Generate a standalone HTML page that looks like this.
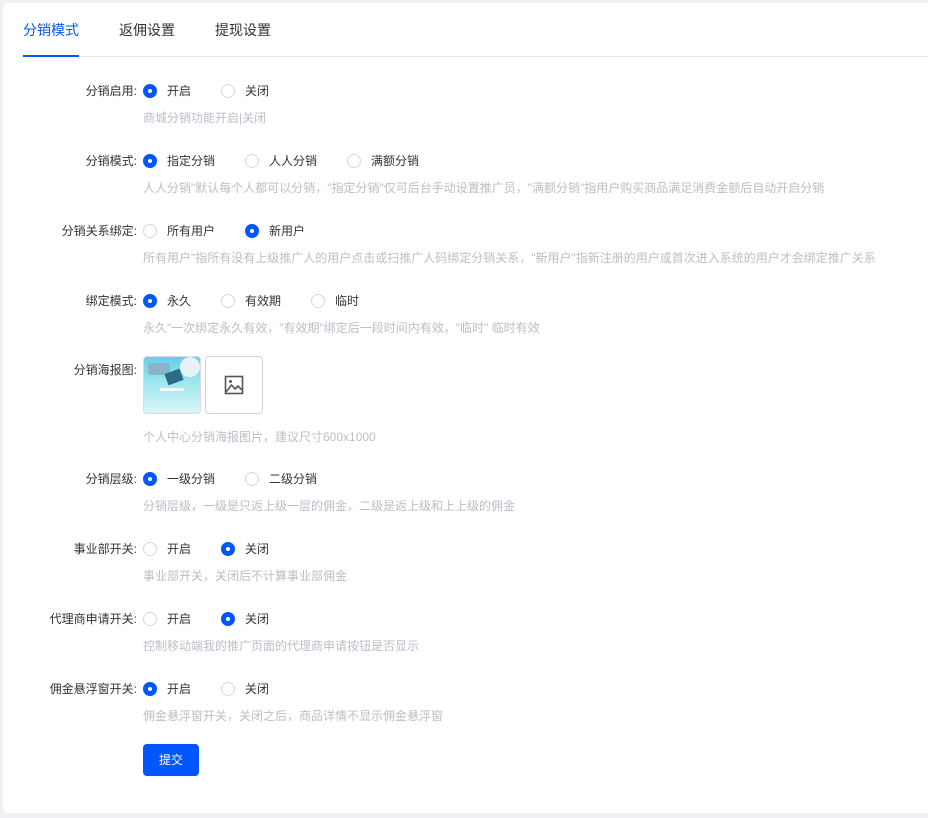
<!DOCTYPE html>
<html><head><meta charset="utf-8"><style>
body{margin:0;width:928px;height:818px;background:#f0f1f5;font-family:"Liberation Sans","Noto Sans CJK SC",sans-serif;font-size:12px;color:#333;position:relative;overflow:hidden}
.card{position:absolute;left:3px;top:3px;width:940px;height:810px;background:#fff;border-radius:4px}
.a{position:absolute;white-space:nowrap}
.tab{top:21px;font-size:14px;color:#333;line-height:18px}
.lbl{right:791px;text-align:right;line-height:16px}
.r{position:absolute;width:12px;height:12px;border:1px solid #d6d9e0;border-radius:50%;background:#fff}
.r.on{border-color:#0256ff;background:#0256ff}
.r.on::after{content:"";position:absolute;left:4px;top:4px;width:4px;height:4px;border-radius:50%;background:#fff}
.t{line-height:16px}
.h{color:#bbbec6;line-height:16px}
</style></head><body>
<div class="card"></div>
<div class="a tab" style="left:23px;color:#0256ff">分销模式</div>
<div class="a tab" style="left:119px">返佣设置</div>
<div class="a tab" style="left:215px">提现设置</div>
<div class="a" style="left:23px;top:56px;width:910px;height:1px;background:#e6e7ee"></div>
<div class="a" style="left:23px;top:55px;width:56px;height:2px;background:#0256ff"></div>

<div class="a lbl" style="top:83px">分销启用:</div>
<div class="r on" style="left:143px;top:84px"></div><div class="a t" style="left:167px;top:83px">开启</div>
<div class="r" style="left:221px;top:84px"></div><div class="a t" style="left:245px;top:83px">关闭</div>
<div class="a h" style="left:143px;top:110px">商城分销功能开启|关闭</div>

<div class="a lbl" style="top:153px">分销模式:</div>
<div class="r on" style="left:143px;top:154px"></div><div class="a t" style="left:167px;top:153px">指定分销</div>
<div class="r" style="left:245px;top:154px"></div><div class="a t" style="left:269px;top:153px">人人分销</div>
<div class="r" style="left:347px;top:154px"></div><div class="a t" style="left:371px;top:153px">满额分销</div>
<div class="a h" style="left:143px;top:180px">人人分销"默认每个人都可以分销，"指定分销"仅可后台手动设置推广员，"满额分销"指用户购买商品满足消费金额后自动开启分销</div>

<div class="a lbl" style="top:223px">分销关系绑定:</div>
<div class="r" style="left:143px;top:224px"></div><div class="a t" style="left:167px;top:223px">所有用户</div>
<div class="r on" style="left:245px;top:224px"></div><div class="a t" style="left:269px;top:223px">新用户</div>
<div class="a h" style="left:143px;top:250px">所有用户"指所有没有上级推广人的用户点击或扫推广人码绑定分销关系，"新用户"指新注册的用户或首次进入系统的用户才会绑定推广关系</div>

<div class="a lbl" style="top:293px">绑定模式:</div>
<div class="r on" style="left:143px;top:294px"></div><div class="a t" style="left:167px;top:293px">永久</div>
<div class="r" style="left:221px;top:294px"></div><div class="a t" style="left:245px;top:293px">有效期</div>
<div class="r" style="left:311px;top:294px"></div><div class="a t" style="left:335px;top:293px">临时</div>
<div class="a h" style="left:143px;top:320px">永久"一次绑定永久有效，"有效期"绑定后一段时间内有效，"临时" 临时有效</div>

<div class="a lbl" style="top:362px">分销海报图:</div>
<div class="a" style="left:143px;top:356px;width:56px;height:56px;border:1px solid #d6dbe6;border-radius:4px;overflow:hidden;background:linear-gradient(180deg,#5fd0e6 0%,#9fe6f0 45%,#d9f6f8 100%)">
<div class="a" style="left:4px;top:6px;width:22px;height:12px;background:#8ab3c8;border-radius:3px"></div>
<div class="a" style="left:22px;top:14px;width:16px;height:12px;background:#2d6a8a;transform:rotate(-20deg)"></div>
<div class="a" style="left:36px;top:0;width:20px;height:20px;background:#e8f2f6;border-radius:50%"></div>
<div class="a" style="left:16px;top:31px;width:24px;height:3px;background:#fff;opacity:.8"></div>
</div>
<div class="a" style="left:205px;top:356px;width:56px;height:56px;border:1px solid #ccd3e0;border-radius:4px;background:#fff"></div>
<svg class="a" style="left:224px;top:375px" width="20" height="20" viewBox="0 0 20 20"><rect x="1.5" y="1.5" width="17" height="17" fill="none" stroke="#555" stroke-width="1.6"/><circle cx="6.5" cy="6.5" r="1.5" fill="#555"/><path d="M2 17 L7.5 10 L11 14 L14 11 L18 15" fill="none" stroke="#555" stroke-width="1.6"/></svg>
<div class="a h" style="left:143px;top:429px">个人中心分销海报图片，建议尺寸600x1000</div>

<div class="a lbl" style="top:471px">分销层级:</div>
<div class="r on" style="left:143px;top:472px"></div><div class="a t" style="left:167px;top:471px">一级分销</div>
<div class="r" style="left:245px;top:472px"></div><div class="a t" style="left:269px;top:471px">二级分销</div>
<div class="a h" style="left:143px;top:498px">分销层级，一级是只返上级一层的佣金，二级是返上级和上上级的佣金</div>

<div class="a lbl" style="top:541px">事业部开关:</div>
<div class="r" style="left:143px;top:542px"></div><div class="a t" style="left:167px;top:541px">开启</div>
<div class="r on" style="left:221px;top:542px"></div><div class="a t" style="left:245px;top:541px">关闭</div>
<div class="a h" style="left:143px;top:568px">事业部开关，关闭后不计算事业部佣金</div>

<div class="a lbl" style="top:611px">代理商申请开关:</div>
<div class="r" style="left:143px;top:612px"></div><div class="a t" style="left:167px;top:611px">开启</div>
<div class="r on" style="left:221px;top:612px"></div><div class="a t" style="left:245px;top:611px">关闭</div>
<div class="a h" style="left:143px;top:638px">控制移动端我的推广页面的代理商申请按钮是否显示</div>

<div class="a lbl" style="top:681px">佣金悬浮窗开关:</div>
<div class="r on" style="left:143px;top:682px"></div><div class="a t" style="left:167px;top:681px">开启</div>
<div class="r" style="left:221px;top:682px"></div><div class="a t" style="left:245px;top:681px">关闭</div>
<div class="a h" style="left:143px;top:708px">佣金悬浮窗开关，关闭之后，商品详情不显示佣金悬浮窗</div>

<div class="a" style="left:143px;top:744px;width:56px;height:32px;background:#0256ff;border-radius:4px;color:#fff;text-align:center;line-height:32px">提交</div>
</body></html>
